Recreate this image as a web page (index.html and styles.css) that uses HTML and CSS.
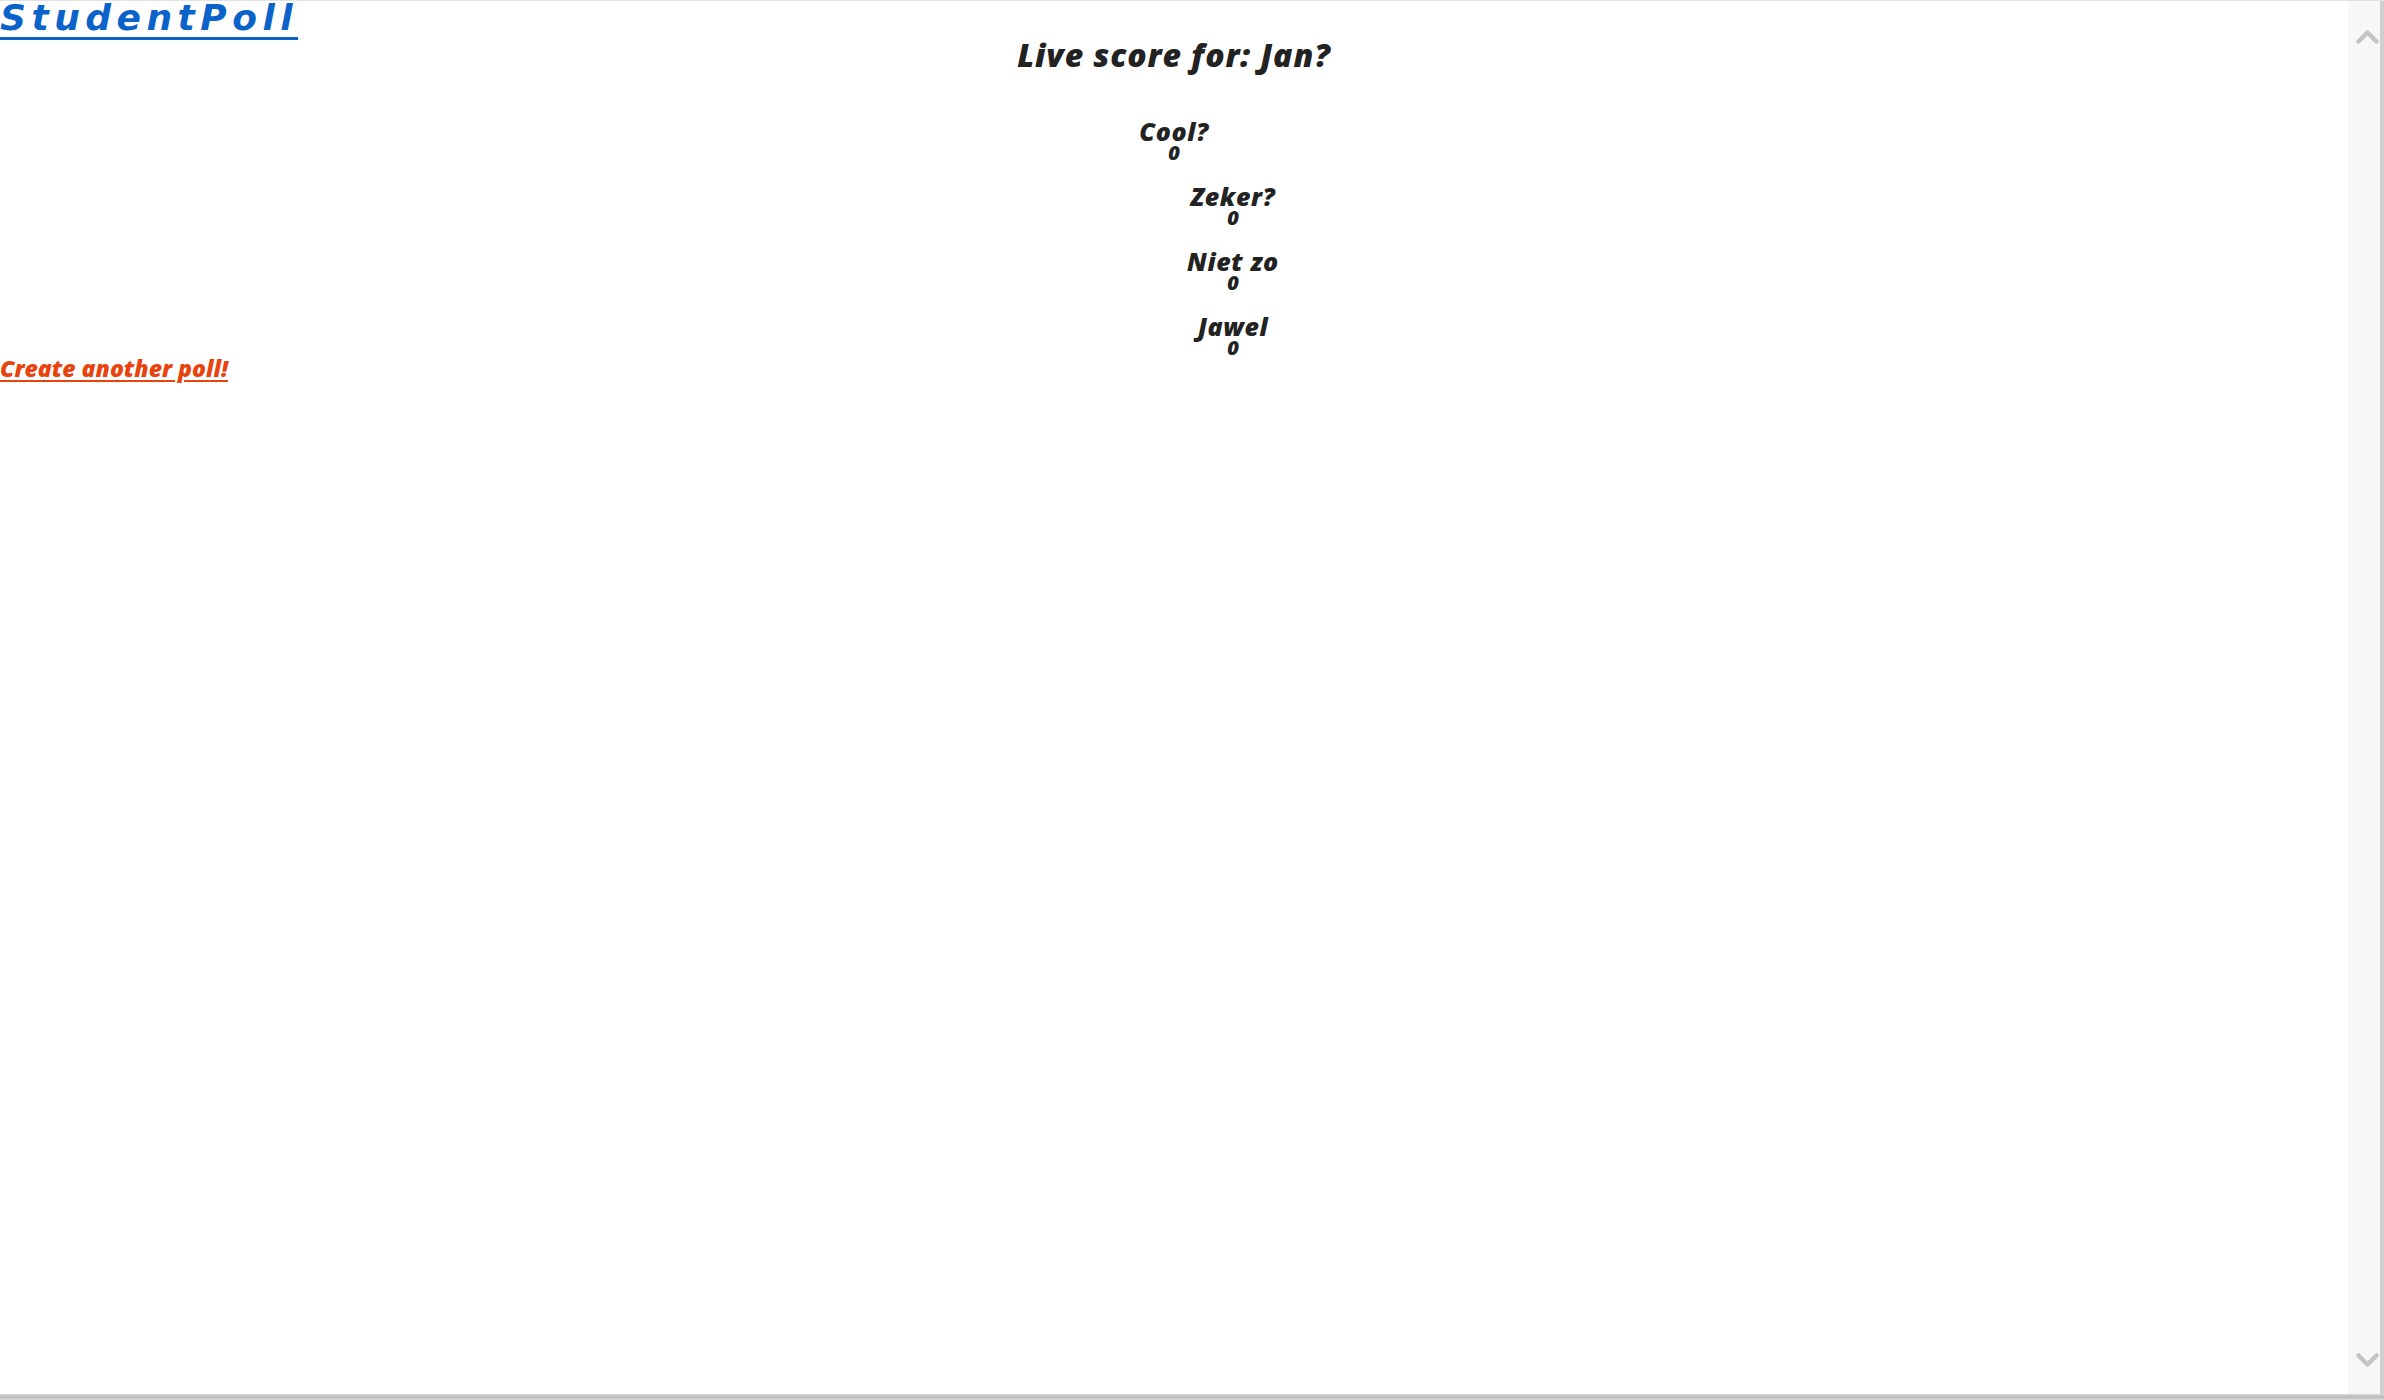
FILE: index.html
```html
<!DOCTYPE html>
<html lang="nl">
<head>
<meta charset="utf-8">
<title>StudentPoll</title>
<link rel="stylesheet" href="styles.css">
</head>
<body>
<div class="window">
  <div class="frame">
    <main class="viewport">
      <header class="site-header">
        <a class="brand" href="#">StudentPoll</a>
      </header>
      <h1 class="title">Live score for: Jan?</h1>
      <section class="results">
        <div class="option">
          <div class="option-label">Cool?</div>
          <div class="option-count">0</div>
        </div>
        <div class="option option-shifted">
          <div class="option-label">Zeker?</div>
          <div class="option-count">0</div>
        </div>
        <div class="option option-shifted">
          <div class="option-label">Niet zo</div>
          <div class="option-count">0</div>
        </div>
        <div class="option option-shifted">
          <div class="option-label">Jawel</div>
          <div class="option-count">0</div>
        </div>
      </section>
      <a class="create-link" href="#">Create another poll!</a>
    </main>
    <div class="scrollbar">
      <svg class="chevron" viewBox="0 0 23 15" width="23" height="15"><polyline points="2.5,12.5 11.5,3.5 20.5,12.5" fill="none" stroke="#c4c4c4" stroke-width="4.5" stroke-linecap="round" stroke-linejoin="round"/></svg>
      <svg class="chevron" viewBox="0 0 23 15" width="23" height="15"><polyline points="2.5,2.5 11.5,11.5 20.5,2.5" fill="none" stroke="#c4c4c4" stroke-width="4.5" stroke-linecap="round" stroke-linejoin="round"/></svg>
    </div>
  </div>
  <div class="bottom-edge"></div>
</div>
</body>
</html>
```

FILE: styles.css
```css
html, body {
  margin: 0;
  padding: 0;
  background: #ffffff;
}

.window {
  height: 1400px;
  box-sizing: border-box;
  border-top: 1px solid #e2e2e2;
  display: flex;
  flex-direction: column;
}

.frame {
  flex: 1;
  display: flex;
  min-height: 0;
}

.viewport {
  flex: 1;
  min-width: 0;
  font-family: "Open Sans", "Liberation Sans", sans-serif;
  font-weight: 800;
  font-style: italic;
  color: #222222;
}

.site-header {
  line-height: 34px;
}

.brand {
  font-family: "DejaVu Sans", "Liberation Sans", sans-serif;
  font-size: 36px;
  font-weight: 700;
  font-style: italic;
  letter-spacing: 5.5px;
  color: #0b63c9;
  text-decoration: underline;
  text-decoration-thickness: 3px;
  text-underline-offset: 7px;
}

.title {
  margin: 0;
  font-size: 32px;
  line-height: 27px;
  font-weight: 800;
  letter-spacing: 0.9px;
  text-align: center;
}

.results {
  margin-top: 51px;
  display: flex;
  flex-direction: column;
  align-items: center;
  gap: 21px;
}

.option {
  display: flex;
  flex-direction: column;
  align-items: center;
}

.option-shifted {
  padding-left: 118px;
}

.option-label {
  font-size: 25px;
  line-height: 24px;
  letter-spacing: 0.6px;
}

.option-count {
  font-size: 20px;
  line-height: 20px;
}

.create-link {
  display: inline-block;
  margin-top: 0;
  font-size: 23px;
  line-height: 20px;
  letter-spacing: 0;
  color: #e8430f;
  text-decoration: underline;
  text-decoration-thickness: 2px;
  text-underline-offset: 3px;
}

.scrollbar {
  width: 32px;
  background: #f7f7f7;
  border-right: 4px solid #cfcfcf;
  display: flex;
  flex-direction: column;
  justify-content: space-between;
  align-items: center;
  padding: 28px 0 26px;
}

.chevron {
  display: block;
  margin-left: 6px;
}

.bottom-edge {
  height: 6px;
  background: linear-gradient(#dadada, #b9b9b9 50%, #dcdcdc);
}
```
